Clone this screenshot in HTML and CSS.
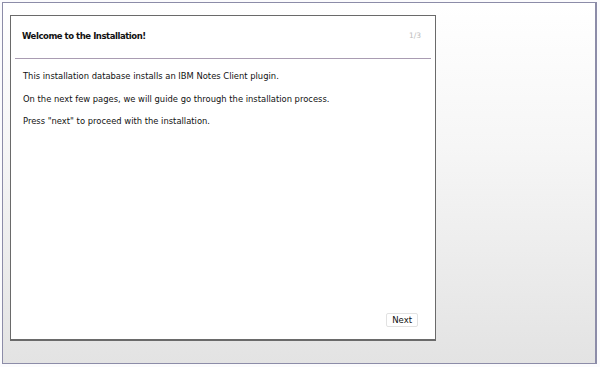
FILE: index.html
```html
<!DOCTYPE html>
<html>
<head>
<meta charset="utf-8">
<link rel="stylesheet" href="styles.css">
</head>
<body>
<div class="frame">
  <div class="panel">
    <div class="header">
      <span class="title">Welcome to the Installation!</span>
      <span class="step">1/3</span>
    </div>
    <div class="content">
      <p>This installation database installs an IBM Notes Client plugin.</p>
      <p>On the next few pages, we will guide go through the installation process.</p>
      <p>Press "next" to proceed with the installation.</p>
    </div>
    <div class="footer">
      <button class="next">Next</button>
    </div>
  </div>
</div>
</body>
</html>
```
FILE: styles.css
```css
html, body {
  margin: 0;
  padding: 0;
  background: #fbfbfd;
}
body {
  width: 600px;
  height: 367px;
  font-family: "DejaVu Sans", Verdana, sans-serif;
  color: #111;
}
.frame {
  margin: 2px 0 0 2px;
  width: 595px;
  height: 362px;
  box-sizing: border-box;
  border: 1px solid #8c8ca8;
  border-right-width: 2px;
  background: linear-gradient(to bottom, #ffffff 0%, #f6f6f6 40%, #e3e3e3 100%);
  padding: 12px 0 0 7px;
}
.panel {
  width: 426px;
  height: 326px;
  box-sizing: border-box;
  background: #fff;
  border: 1px solid #6a6a6a;
  border-bottom-width: 2px;
  display: flex;
  flex-direction: column;
}
.header {
  margin: 0 4px;
  height: 43px;
  box-sizing: border-box;
  border-bottom: 1px solid #a99cb2;
  display: flex;
  align-items: flex-start;
  justify-content: space-between;
  padding: 15px 10px 0 7px;
}
.title {
  font-weight: bold;
  font-size: 8.5px;
  line-height: 10px;
  letter-spacing: -0.45px;
}
.step {
  font-size: 7.5px;
  line-height: 10px;
  color: #bcbcbc;
}
.content {
  padding: 12px 0 0 12px;
  flex: 1;
}
.content p {
  margin: 0 0 12.5px 0;
  font-size: 8.4px;
  line-height: 10px;
}
.footer {
  display: flex;
  justify-content: flex-end;
  padding: 0 17px 12px 0;
}
.next {
  font-family: "DejaVu Sans", Verdana, sans-serif;
  font-size: 8.5px;
  color: #111;
  background: #fff;
  border: 1px solid #e2e2e2;
  border-radius: 2px;
  padding: 1px 5px;
  height: 14px;
  line-height: 10px;
}
```
